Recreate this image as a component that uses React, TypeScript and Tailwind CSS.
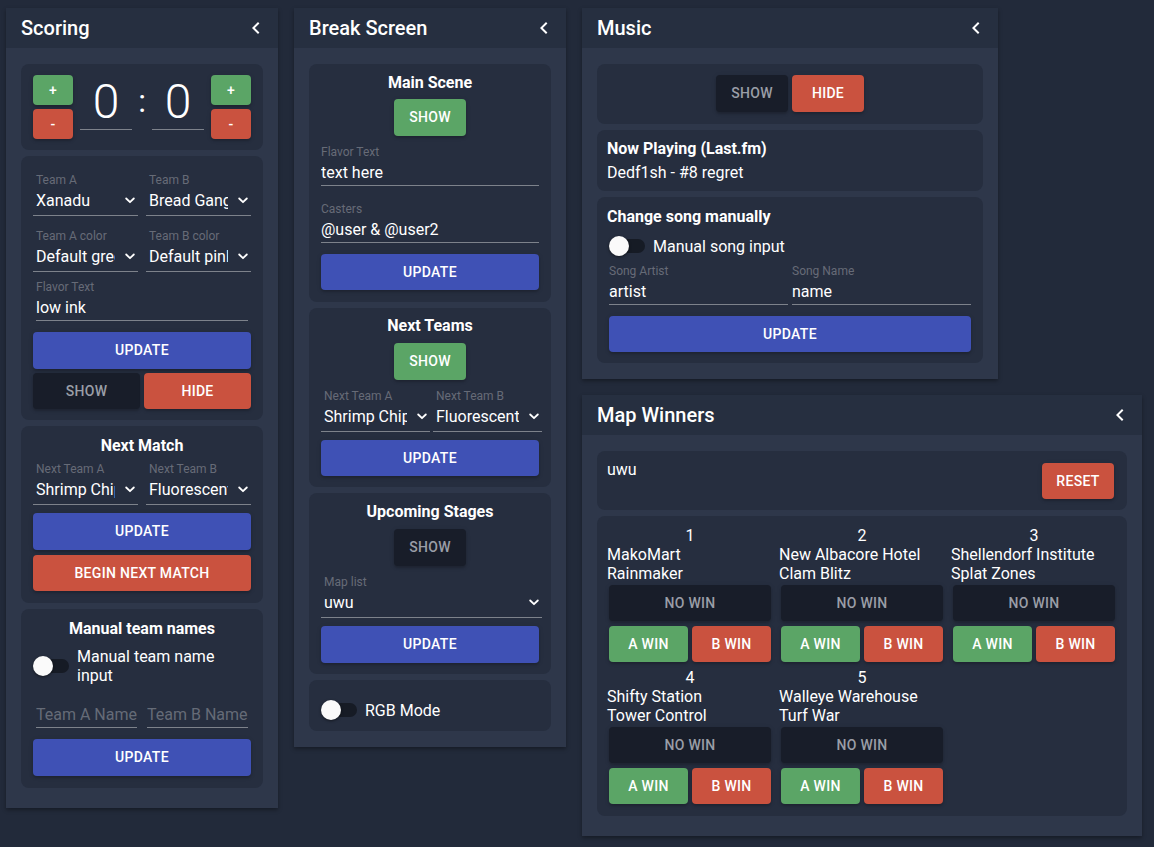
import React from "react";

const BTN_BASE =
  "flex items-center justify-center rounded-[4px] text-[14px] font-medium uppercase tracking-[0.3px] shadow-[0_2px_2px_rgba(0,0,0,0.14),0_1px_5px_rgba(0,0,0,0.12)]";
const COLORS: Record<string, string> = {
  green: "bg-[#5ba566] text-white",
  red: "bg-[#ca523f] text-white",
  blue: "bg-[#3f51b5] text-white",
  dark: "bg-[#181d29] text-[#9a9ea7]",
};

function Btn({
  color,
  className = "",
  children,
}: {
  color: "green" | "red" | "blue" | "dark";
  className?: string;
  children: React.ReactNode;
}) {
  return <div className={`${BTN_BASE} ${COLORS[color]} ${className}`}>{children}</div>;
}

function ChevronLeft() {
  return (
    <svg width="24" height="24" viewBox="0 0 24 24" className="shrink-0">
      <path d="M15.41 7.41 14 6l-6 6 6 6 1.41-1.41L10.83 12z" fill="#ffffff" />
    </svg>
  );
}

function ChevronDown() {
  return (
    <svg width="10" height="7" viewBox="0 0 10 7" className="shrink-0">
      <path d="M1.2 1.5 L5 5.2 L8.8 1.5" fill="none" stroke="#ffffff" strokeWidth="1.8" strokeLinecap="round" strokeLinejoin="round" />
    </svg>
  );
}

function Panel({
  title,
  className = "",
  bodyClass = "",
  children,
}: {
  title: string;
  className?: string;
  bodyClass?: string;
  children: React.ReactNode;
}) {
  return (
    <div className={`bg-[#2e374a] shadow-[0_2px_4px_rgba(0,0,0,0.35)] ${className}`}>
      <div className="flex h-10 items-center justify-between bg-[#262f40] pl-[15px] pr-[10px]">
        <span className="text-[20px] font-medium leading-[24px] text-white">{title}</span>
        <ChevronLeft />
      </div>
      <div className={`flex flex-col gap-[6px] px-[15px] pt-4 ${bodyClass}`}>{children}</div>
    </div>
  );
}

function Card({ className = "", children }: { className?: string; children: React.ReactNode }) {
  return <div className={`rounded-lg bg-[#262e3f] ${className}`}>{children}</div>;
}

function SelectField({ label, value, className = "" }: { label: string; value: string; className?: string }) {
  return (
    <div className={`flex min-w-0 flex-col ${className}`}>
      <span className="pl-[3px] text-[12px] leading-[14px] text-[#666b77]">{label}</span>
      <div className="flex items-center border-b border-[#7d828b] pb-[5px] pl-[3px] pr-[3px] pt-1">
        <div className="mr-[10px] min-w-0 flex-1 overflow-hidden whitespace-nowrap text-[16px] leading-[19px] text-white">
          {value}
        </div>
        <ChevronDown />
      </div>
    </div>
  );
}

function TextField({
  label,
  value,
  placeholder,
  className = "",
}: {
  label?: string;
  value?: string;
  placeholder?: string;
  className?: string;
}) {
  return (
    <div className={`flex min-w-0 flex-col ${className}`}>
      {label && <span className="text-[12px] leading-[14px] text-[#666b77]">{label}</span>}
      <div
        className={`overflow-hidden whitespace-nowrap border-b border-[#7d828b] pb-[3px] pt-1 text-[16px] leading-[19px] ${
          value ? "text-white" : "text-[#656b77]"
        }`}
      >
        {value ?? placeholder}
      </div>
    </div>
  );
}

function Toggle() {
  return (
    <div className="relative h-5 w-9 shrink-0">
      <div className="absolute left-[2px] top-[3px] h-[14px] w-[34px] rounded-full bg-[#161b25]" />
      <div className="absolute left-0 top-0 h-5 w-5 rounded-full bg-[#fafafa] shadow-[0_1px_3px_rgba(0,0,0,0.5)]" />
    </div>
  );
}

function CardTitle({ children }: { children: React.ReactNode }) {
  return <div className="text-center text-[16px] font-bold leading-[19px] text-white">{children}</div>;
}

function ScoreNum() {
  return (
    <div className="flex w-[52px] flex-col items-center border-b border-[#7d828b]">
      <span className="text-[48px] font-light leading-[54px] text-white">0</span>
    </div>
  );
}

function Scoring() {
  return (
    <Panel title="Scoring" className="w-[272px]" bodyClass="pb-5">
      <Card className="flex items-start px-3 py-[11px]">
        <div className="flex flex-col gap-1">
          <Btn color="green" className="h-[30px] w-10">+</Btn>
          <Btn color="red" className="h-[30px] w-10">-</Btn>
        </div>
        <div className="ml-[7px]">
          <ScoreNum />
        </div>
        <div className="mt-[10px] w-5 text-center text-[32px] leading-[32px] text-white">:</div>
        <div className="mr-[7px]">
          <ScoreNum />
        </div>
        <div className="flex flex-col gap-1">
          <Btn color="green" className="h-[30px] w-10">+</Btn>
          <Btn color="red" className="h-[30px] w-10">-</Btn>
        </div>
      </Card>

      <Card className="flex flex-col px-3 pb-[11px] pt-[17px]">
        <div className="grid grid-cols-2 gap-x-2">
          <SelectField label="Team A" value="Xanadu" />
          <SelectField label="Team B" value="Bread Gang" />
        </div>
        <div className="mt-[13px] grid grid-cols-2 gap-x-2">
          <SelectField label="Team A color" value="Default green" />
          <SelectField label="Team B color" value="Default pink" />
        </div>
        <TextField label="Flavor Text" value="low ink" className="mx-[3px] mt-2" />
        <Btn color="blue" className="mt-[11px] h-[37px]">Update</Btn>
        <div className="mt-1 grid grid-cols-2 gap-1">
          <Btn color="dark" className="h-9">Show</Btn>
          <Btn color="red" className="h-9">Hide</Btn>
        </div>
      </Card>

      <Card className="flex flex-col px-3 pb-3 pt-[10px]">
        <CardTitle>Next Match</CardTitle>
        <div className="mt-[7px] grid grid-cols-2 gap-x-2">
          <SelectField label="Next Team A" value="Shrimp Chips" />
          <SelectField label="Next Team B" value="Fluorescent" />
        </div>
        <Btn color="blue" className="mt-2 h-[37px]">Update</Btn>
        <Btn color="red" className="mt-[5px] h-9">Begin next match</Btn>
      </Card>

      <Card className="flex flex-col px-3 pb-3 pt-[10px]">
        <CardTitle>Manual team names</CardTitle>
        <div className="mt-[9px] flex items-center gap-2">
          <Toggle />
          <span className="max-w-[150px] text-[16px] leading-[19px] text-white">Manual team name input</span>
        </div>
        <div className="mx-[3px] grid grid-cols-2 gap-x-[10px] pt-4">
          <TextField placeholder="Team A Name" />
          <TextField placeholder="Team B Name" />
        </div>
        <Btn color="blue" className="mt-[11px] h-[37px]">Update</Btn>
      </Card>
    </Panel>
  );
}

function BreakScreen() {
  return (
    <Panel title="Break Screen" className="w-[272px]" bodyClass="pb-4">
      <Card className="flex flex-col px-3 pb-3 pt-[9px]">
        <CardTitle>Main Scene</CardTitle>
        <Btn color="green" className="mt-[7px] h-[37px] w-[72px] self-center">Show</Btn>
        <TextField label="Flavor Text" value="text here" className="mt-[9px]" />
        <TextField label="Casters" value="@user & @user2" className="mt-4" />
        <Btn color="blue" className="mt-[11px] h-9">Update</Btn>
      </Card>

      <Card className="flex flex-col px-3 pb-[11px] pt-2">
        <CardTitle>Next Teams</CardTitle>
        <Btn color="green" className="mt-2 h-[37px] w-[72px] self-center">Show</Btn>
        <div className="-mr-[3px] mt-[9px] grid grid-cols-2 gap-x-[3px]">
          <SelectField label="Next Team A" value="Shrimp Chips" />
          <SelectField label="Next Team B" value="Fluorescent" />
        </div>
        <Btn color="blue" className="mt-2 h-9">Update</Btn>
      </Card>

      <Card className="flex flex-col px-3 pb-[11px] pt-[9px]">
        <CardTitle>Upcoming Stages</CardTitle>
        <Btn color="dark" className="mt-2 h-[37px] w-[72px] self-center">Show</Btn>
        <SelectField label="Map list" value="uwu" className="-mr-[3px] mt-[9px]" />
        <Btn color="blue" className="mt-2 h-[37px]">Update</Btn>
      </Card>

      <Card className="flex items-center gap-2 px-3 pb-[11px] pt-5">
        <Toggle />
        <span className="text-[16px] leading-[19px] text-white">RGB Mode</span>
      </Card>
    </Panel>
  );
}

function Music() {
  return (
    <Panel title="Music" className="w-[416px]" bodyClass="pb-4">
      <Card className="flex justify-center gap-1 px-3 pb-3 pt-[11px]">
        <Btn color="dark" className="h-[37px] w-[72px]">Show</Btn>
        <Btn color="red" className="h-[37px] w-[72px]">Hide</Btn>
      </Card>
      <Card className="flex flex-col px-[10px] pb-[9px] pt-[9px]">
        <span className="text-[16px] font-bold leading-[19px] text-white">Now Playing (Last.fm)</span>
        <span className="mt-[5px] text-[16px] leading-[19px] text-white">Dedf1sh - #8 regret</span>
      </Card>
      <Card className="flex flex-col px-3 pb-[11px] pt-[10px]">
        <span className="-ml-[2px] text-[16px] font-bold leading-[19px] text-white">Change song manually</span>
        <div className="mt-[10px] flex items-center gap-2">
          <Toggle />
          <span className="text-[16px] leading-[19px] text-white">Manual song input</span>
        </div>
        <div className="mt-2 grid grid-cols-2 gap-x-1">
          <TextField label="Song Artist" value="artist" />
          <TextField label="Song Name" value="name" />
        </div>
        <Btn color="blue" className="mt-[11px] h-9">Update</Btn>
      </Card>
    </Panel>
  );
}

const MAPS = [
  { n: 1, map: "MakoMart", mode: "Rainmaker" },
  { n: 2, map: "New Albacore Hotel", mode: "Clam Blitz" },
  { n: 3, map: "Shellendorf Institute", mode: "Splat Zones" },
  { n: 4, map: "Shifty Station", mode: "Tower Control" },
  { n: 5, map: "Walleye Warehouse", mode: "Turf War" },
];

function MapWinners() {
  return (
    <Panel title="Map Winners" className="w-[560px]" bodyClass="pb-5">
      <Card className="flex items-start justify-between pl-[10px] pr-[13px]">
        <span className="pt-[9px] text-[16px] leading-[19px] text-white">uwu</span>
        <Btn color="red" className="mb-[11px] mt-3 h-9 w-[72px]">Reset</Btn>
      </Card>
      <Card className="grid grid-cols-3 gap-x-[6px] gap-y-[6px] px-[10px] pb-3 pt-[10px]">
        {MAPS.map((m) => (
          <div key={m.n} className="flex flex-col">
            <span className="text-center text-[16px] leading-[19px] text-white">{m.n}</span>
            <span className="text-[16px] leading-[19px] text-white">{m.map}</span>
            <span className="text-[16px] leading-[19px] text-white">{m.mode}</span>
            <Btn color="dark" className="mx-[2px] mt-[2px] h-9 text-[#8e939c]">No win</Btn>
            <div className="mx-[2px] mt-[5px] grid grid-cols-2 gap-1">
              <Btn color="green" className="h-9">A win</Btn>
              <Btn color="red" className="h-9">B win</Btn>
            </div>
          </div>
        ))}
      </Card>
    </Panel>
  );
}

export default function App() {
  return (
    <div className="flex min-h-screen items-start gap-4 bg-[#222a3a] pl-[6px] pt-2 font-['Roboto',sans-serif]">
      <Scoring />
      <BreakScreen />
      <div className="flex flex-col items-start gap-4">
        <Music />
        <MapWinners />
      </div>
    </div>
  );
}
